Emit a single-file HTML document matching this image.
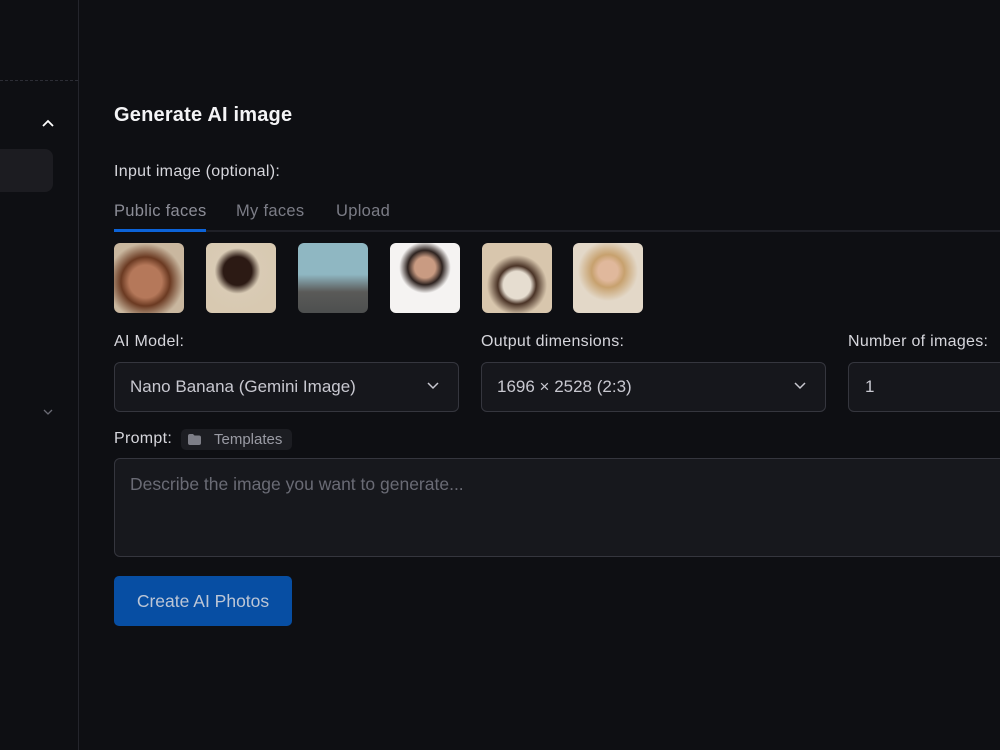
<!DOCTYPE html>
<html><head><meta charset="utf-8"><style>
*{box-sizing:border-box;margin:0;padding:0}
body{width:1000px;height:750px;overflow:hidden;background:#0e0f13;font-family:"Liberation Sans",sans-serif;color:#e6e6ea;position:relative}
.abs{position:absolute}
.side{left:0;top:0;width:79px;height:750px;border-right:1px solid #24252c}
.dash{left:0;top:80px;width:78px;border-top:1px dashed #2c2d35}
.sel{left:-10px;top:149px;width:63px;height:43px;background:#1c1c21;border-radius:8px}
h1{position:absolute;left:114px;top:104px;font-size:20px;font-weight:bold;color:#f4f4f6;letter-spacing:0.2px}
.lbl{font-size:16px;color:#d6d6dc;letter-spacing:0.3px}
.tab{font-size:16.5px;color:#7b7c86;top:202px;letter-spacing:0.3px}
.thumb{top:243px;width:70px;height:70px;border-radius:6px}
.sel2{top:362px;height:50px;border:1px solid #35363e;border-radius:6px;background:#16171c;font-size:17px;color:#c8c8d0;padding:14px 15px}
</style></head><body>
<div class="abs side"></div>
<div class="abs dash"></div>
<div class="abs sel"></div>
<svg class="abs" style="left:41px;top:119px" width="14" height="10"><path d="M2 7 L7 2 L12 7" stroke="#fff" stroke-width="1.8" fill="none"/></svg>
<svg class="abs" style="left:42px;top:408px" width="12" height="8"><path d="M2 2 L6 6 L10 2" stroke="#6a6b74" stroke-width="1.3" fill="none"/></svg>
<h1>Generate AI image</h1>
<div class="abs lbl" style="left:114px;top:163px">Input image (optional):</div>
<div class="abs tab" style="left:114px;color:#8c8d97">Public faces</div>
<div class="abs tab" style="left:236px">My faces</div>
<div class="abs tab" style="left:336px">Upload</div>
<div class="abs" style="left:114px;top:230px;width:886px;height:2px;background:#1f2027"></div>
<div class="abs" style="left:114px;top:229px;width:92px;height:3px;background:#0c63d8"></div>
<div class="abs thumb" style="left:114px;background:radial-gradient(circle at 45% 55%,#b5785a 0 30%,#6b3a22 45%,#c9b79f 70%)"></div>
<div class="abs thumb" style="left:206px;background:radial-gradient(circle at 45% 40%,#2c1a14 0 25%,#d9cbb5 40%,#d8c9b1 70%)"></div>
<div class="abs thumb" style="left:298px;background:linear-gradient(#8fb7c2 0 45%,#5a5a58 70%,#4d4f4f)"></div>
<div class="abs thumb" style="left:390px;background:radial-gradient(circle at 50% 35%,#c99b82 0 18%,#2e2320 30%,#f5f3f2 45%)"></div>
<div class="abs thumb" style="left:482px;background:radial-gradient(circle at 50% 60%,#e6ddd0 0 25%,#4a3326 35%,#d8c6ad 55%)"></div>
<div class="abs thumb" style="left:573px;background:radial-gradient(circle at 50% 40%,#e0b89c 0 18%,#c7a16e 30%,#e3d8c8 55%)"></div>
<div class="abs lbl" style="left:114px;top:333px">AI Model:</div>
<div class="abs lbl" style="left:481px;top:333px">Output dimensions:</div>
<div class="abs lbl" style="left:848px;top:333px">Number of images:</div>
<div class="abs sel2" style="left:114px;width:345px">Nano Banana (Gemini Image)</div>
<div class="abs sel2" style="left:481px;width:345px">1696 × 2528 (2:3)</div>
<div class="abs sel2" style="left:848px;width:170px;padding-left:16px">1</div>
<svg class="abs" style="left:426px;top:381px" width="14" height="9"><path d="M2 2 L7 7 L12 2" stroke="#c8c8d0" stroke-width="1.5" fill="none"/></svg>
<svg class="abs" style="left:793px;top:381px" width="14" height="9"><path d="M2 2 L7 7 L12 2" stroke="#c8c8d0" stroke-width="1.5" fill="none"/></svg>
<div class="abs lbl" style="left:114px;top:430px">Prompt:</div>
<div class="abs" style="left:181px;top:429px;width:111px;height:21px;background:#1c1d22;border-radius:5px;font-size:15px;color:#9a9ba4;padding:2px 0 0 33px">Templates</div>
<svg class="abs" style="left:188px;top:434px" width="13" height="11"><path d="M0 2 Q0 0 2 0 L5 0 L6.5 1.5 L11 1.5 Q13 1.5 13 3.5 L13 9 Q13 11 11 11 L2 11 Q0 11 0 9Z" fill="#7d7e87"/></svg>
<div class="abs" style="left:114px;top:458px;width:900px;height:99px;border:1px solid #35363e;border-radius:6px;background:#17181d;font-size:17.5px;color:#6a6b75;padding:15px 15px">Describe the image you want to generate...</div>
<div class="abs" style="left:114px;top:576px;width:178px;height:50px;background:#074ea3;border-radius:5px;font-size:17.5px;color:#bcc6d6;text-align:center;line-height:50px">Create AI Photos</div>
</body></html>
